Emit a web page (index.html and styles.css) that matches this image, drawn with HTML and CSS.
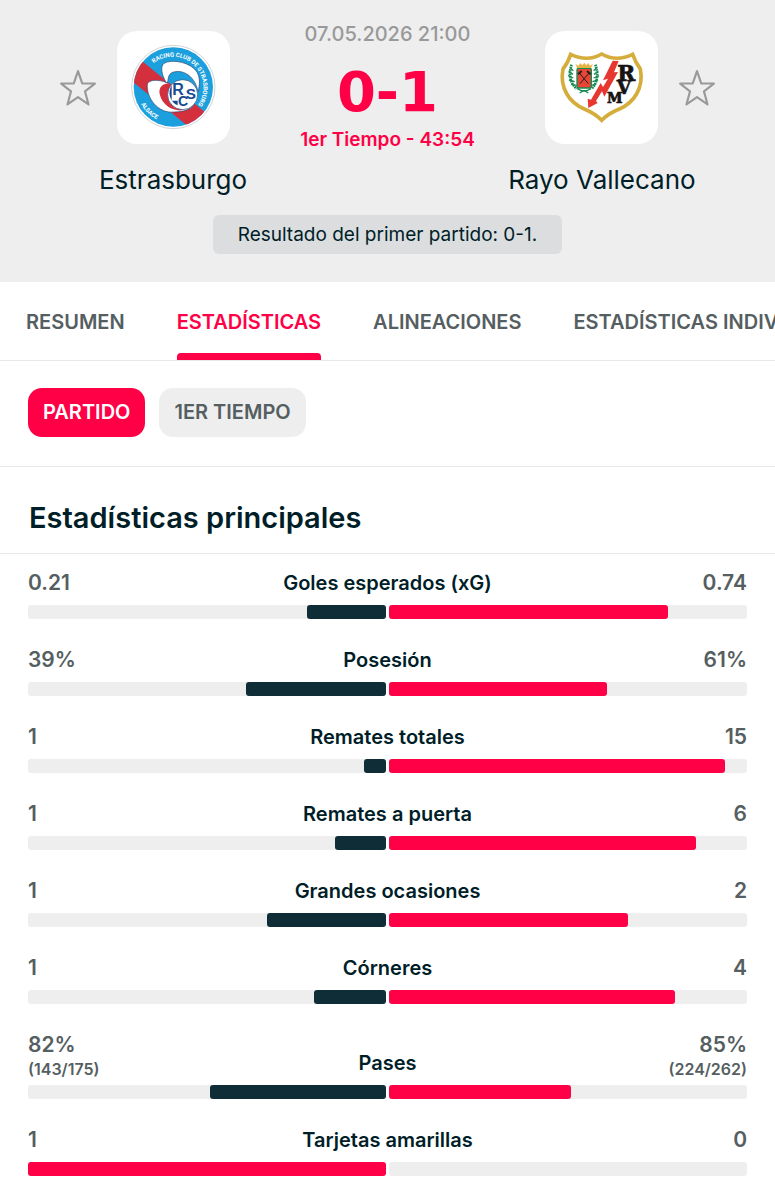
FILE: index.html
```html
<!DOCTYPE html>
<html lang="es">
<head>
    <meta charset="UTF-8">
    <meta name="viewport" content="width=device-width, initial-scale=1.0">
    <title>Estrasburgo - Rayo Vallecano</title>
    <link rel="stylesheet" href="styles.css">
</head>
<body>
    <header class="match-header">
        <div class="scoreboard">
            <div class="team">
                <button class="star" type="button" aria-label="Seguir a Estrasburgo">
                    <svg viewBox="0 0 36 36"><path d="M18 2 L22 13.6 L34 13.8 L24.6 21.2 L28 33.6 L18 26.6 L8 33.6 L11.4 21.2 L2 13.8 L14 13.6 Z"/></svg>
                </button>
                <div class="crest">
                    <svg viewBox="225 54 294 294">
                        <defs>
                            <clipPath id="disc"><circle cx="373" cy="201" r="119"/></clipPath>
                            <path id="arcTop" d="M314 130 A92 92 0 1 1 414 283.500"/>
                            <path id="arcBottom" d="M276 252 A110 110 0 0 0 345 307"/>
                        </defs>
                        <circle cx="373" cy="201" r="125" fill="#fff" stroke="#b9bec2" stroke-width="2"/>
                        <g clip-path="url(#disc)">
                            <rect x="250" y="78" width="250" height="250" fill="#1c9fdd"/>
                            <path d="M265 112 L500 303 L450 345 L235 172 Z" fill="#d32f3c"/>
                        </g>
                        <path d="M352 188 C338 165 333 140 345 130 C366 116 428 126 445 158 C456 180 450 204 447 216 C440 172 406 148 374 156 C358 160 358 174 356 187 Z" fill="#fff" stroke="#27436f" stroke-width="2"/>
                        <path d="M357 187 C360 168 374 160 394 165 C424 170 440 190 446 214 L440 240 C430 190 390 176 357 187 Z" fill="#1c9fdd"/>
                        <path d="M352 188 C332 178 300 178 295 192 C291 234 328 282 376 276 C406 276 424 268 434 256 L400 262 C366 252 352 218 362 190 Z" fill="#fff" stroke="#27436f" stroke-width="2"/>
                        <path d="M360 190 C334 192 328 208 333 226 C342 260 378 276 404 270 C374 252 362 226 368 196 Z" fill="#d32f3c"/>
                        <circle cx="401" cy="224" r="45" fill="#fff" stroke="#27436f" stroke-width="2"/>
                        <path d="M368 196 L368 242 L386 242 L386 256 C364 248 354 220 368 196 Z" fill="#164a91"/>
                        <g class="monogram">
                            <text x="370" y="226" font-size="48">R</text>
                            <text x="387" y="259" font-size="42">C</text>
                            <text x="410" y="238" font-size="46">S</text>
                        </g>
                        <text class="crest-text"><textPath href="#arcTop">RACING CLUB DE STRASBOURG</textPath></text>
                        <text class="crest-text"><textPath href="#arcBottom">ALSACE</textPath></text>
                    </svg>
                </div>
                <div class="team-name">Estrasburgo</div>
            </div>

            <div class="result">
                <div class="date">07.05.2026 21:00</div>
                <div class="score">0-1</div>
                <div class="status">1er Tiempo - 43:54</div>
            </div>

            <div class="team team-away">
                <button class="star" type="button" aria-label="Seguir a Rayo Vallecano">
                    <svg viewBox="0 0 36 36"><path d="M18 2 L22 13.6 L34 13.8 L24.6 21.2 L28 33.6 L18 26.6 L8 33.6 L11.4 21.2 L2 13.8 L14 13.6 Z"/></svg>
                </button>
                <div class="crest">
                    <svg viewBox="48 54 294 294">
                        <path d="M104 103 Q154 127 197 102 Q241 127 290 103 Q299 129 313 147 C324 204 294 248 250 267 Q216 281 197 301 Q178 281 145 267 C100 248 70 204 81 147 Q96 129 104 103 Z" fill="#fff" stroke="#d5ad3c" stroke-width="11"/>
                        <!-- laurel -->
                        <g fill="none" stroke="#168b50" stroke-width="8" stroke-dasharray="5 2">
                            <path d="M107 134 C98 158 100 188 122 206"/>
                            <path d="M178 134 C187 158 186 188 167 206"/>
                        </g>
                        <g fill="none" stroke="#168b50" stroke-width="4">
                            <path d="M103 143 L112 152 M98 154 L111 163 M96 167 L112 174 M99 180 L116 185 M105 193 L122 196"/>
                            <path d="M182 143 L173 152 M187 154 L174 163 M189 167 L173 174 M186 180 L169 185 M180 193 L163 196"/>
                            <path d="M124 206 Q144 220 165 206 M144 211 L131 219 M144 211 L157 219"/>
                        </g>
                        <rect x="123" y="145" width="43" height="59" rx="4" fill="#e94435" stroke="#168b50" stroke-width="4"/>
                        <path d="M124 144 L118 132 L128 137 L133 129 L139 136 L145 128 L151 136 L157 129 L162 137 L171 132 L165 144 Z" fill="#e5b544"/>
                        <path d="M130 159 L157 191 M159 159 L132 191" stroke="#251f20" stroke-width="3"/>
                        <path d="M126 163 L137 153 M153 153 L164 163" stroke="#251f20" stroke-width="6"/>
                        <path d="M230 122 L248 123 L234 157 L246 156 L205 230 L198 214 L180 243 L185 249 L157 264 L155 236 L165 239 L194 189 L201 201 L216 176 L201 181 Z" fill="#e63731"/>
                        <g class="rvm">
                            <text x="244" y="182" font-size="65">R</text>
                            <text x="242" y="221" font-size="56">V</text>
                            <text x="213" y="250" font-size="42">M</text>
                        </g>
                    </svg>
                </div>
                <div class="team-name">Rayo Vallecano</div>
            </div>
        </div>
        <div class="first-leg">Resultado del primer partido: 0-1.</div>
    </header>

    <nav class="tabs">
        <a href="#resumen">RESUMEN</a>
        <a class="active" href="#estadisticas">ESTADÍSTICAS</a>
        <a href="#alineaciones">ALINEACIONES</a>
        <a href="#individuales">ESTADÍSTICAS INDIVIDUALES</a>
    </nav>

    <div class="filters">
        <button class="filter selected" type="button">PARTIDO</button>
        <button class="filter" type="button">1ER TIEMPO</button>
    </div>

    <main id="estadisticas">
        <h1>Estadísticas principales</h1>
        <ul class="stats">
            <li class="stat">
                <div class="values"><span class="value">0.21</span><span class="label">Goles esperados (xG)</span><span class="value">0.74</span></div>
                <div class="bars">
                    <div class="track home"><div class="fill" style="width: 22.1%"></div></div>
                    <div class="track away"><div class="fill lead" style="width: 77.9%"></div></div>
                </div>
            </li>
            <li class="stat">
                <div class="values"><span class="value">39%</span><span class="label">Posesión</span><span class="value">61%</span></div>
                <div class="bars">
                    <div class="track home"><div class="fill" style="width: 39%"></div></div>
                    <div class="track away"><div class="fill lead" style="width: 61%"></div></div>
                </div>
            </li>
            <li class="stat">
                <div class="values"><span class="value">1</span><span class="label">Remates totales</span><span class="value">15</span></div>
                <div class="bars">
                    <div class="track home"><div class="fill" style="width: 6.25%"></div></div>
                    <div class="track away"><div class="fill lead" style="width: 93.75%"></div></div>
                </div>
            </li>
            <li class="stat">
                <div class="values"><span class="value">1</span><span class="label">Remates a puerta</span><span class="value">6</span></div>
                <div class="bars">
                    <div class="track home"><div class="fill" style="width: 14.3%"></div></div>
                    <div class="track away"><div class="fill lead" style="width: 85.7%"></div></div>
                </div>
            </li>
            <li class="stat">
                <div class="values"><span class="value">1</span><span class="label">Grandes ocasiones</span><span class="value">2</span></div>
                <div class="bars">
                    <div class="track home"><div class="fill" style="width: 33.3%"></div></div>
                    <div class="track away"><div class="fill lead" style="width: 66.7%"></div></div>
                </div>
            </li>
            <li class="stat">
                <div class="values"><span class="value">1</span><span class="label">Córneres</span><span class="value">4</span></div>
                <div class="bars">
                    <div class="track home"><div class="fill" style="width: 20%"></div></div>
                    <div class="track away"><div class="fill lead" style="width: 80%"></div></div>
                </div>
            </li>
            <li class="stat">
                <div class="values"><span class="value">82%<small>(143/175)</small></span><span class="label">Pases</span><span class="value">85%<small>(224/262)</small></span></div>
                <div class="bars">
                    <div class="track home"><div class="fill" style="width: 49.1%"></div></div>
                    <div class="track away"><div class="fill lead" style="width: 50.9%"></div></div>
                </div>
            </li>
            <li class="stat">
                <div class="values"><span class="value">1</span><span class="label">Tarjetas amarillas</span><span class="value">0</span></div>
                <div class="bars">
                    <div class="track home"><div class="fill lead" style="width: 100%"></div></div>
                    <div class="track away"><div class="fill" style="width: 0%"></div></div>
                </div>
            </li>
        </ul>
    </main>
</body>
</html>
```
FILE: styles.css
```css
/* General Styles */
* {
    box-sizing: border-box;
}

body {
    font-family: Inter, "Liberation Sans", sans-serif;
    background-color: #ffffff;
    color: #001e28;
    margin: 0;
    overflow-x: hidden;
}

button {
    font-family: inherit;
    border: none;
    cursor: pointer;
}

/* Match Header */
.match-header {
    background-color: #eeeeee;
    padding: 20px 46px 28px;
}

.scoreboard {
    display: grid;
    grid-template-columns: 1fr auto 1fr;
}

.team {
    display: grid;
    grid-template-columns: 1fr auto 1fr;
    align-items: center;
    column-gap: 20px;
    padding-top: 11px;
}

.crest {
    grid-column: 2;
    grid-row: 1;
    width: 113px;
    height: 113px;
    padding: 7px;
    background-color: #ffffff;
    border-radius: 20px;
}

.crest svg {
    display: block;
    width: 98px;
    height: 98px;
}

.crest-text {
    font-family: Roboto, sans-serif;
    font-size: 18px;
    font-weight: bold;
    fill: #ffffff;
}

.monogram {
    font-family: "Liberation Sans", sans-serif;
    font-weight: bold;
    fill: #164a91;
}

.rvm {
    font-family: "DejaVu Serif", serif;
    font-weight: bold;
    fill: #171314;
    stroke: #171314;
    stroke-width: 2;
}

.star {
    grid-column: 1;
    grid-row: 1;
    justify-self: end;
    padding: 0;
    background: none;
}

.team-away .star {
    grid-column: 3;
    justify-self: start;
}

.star svg {
    display: block;
    width: 38px;
    height: 38px;
    fill: none;
    stroke: #999999;
    stroke-width: 2;
    stroke-linejoin: round;
}

.team-name {
    grid-column: 1 / 4;
    padding-top: 20px;
    font-size: 26px;
    line-height: 32px;
    text-align: center;
    white-space: nowrap;
}

/* Result */
.result {
    text-align: center;
    white-space: nowrap;
}

.date {
    font-size: 20px;
    font-weight: 500;
    line-height: 28px;
    color: #999999;
}

.score {
    padding-top: 12px;
    font-family: "DejaVu Sans", sans-serif;
    font-size: 56px;
    font-weight: bold;
    line-height: 64px;
    color: #ff0046;
}

.status {
    font-size: 19px;
    font-weight: 600;
    line-height: 32px;
    color: #ff0046;
}

.first-leg {
    width: fit-content;
    margin: 19px auto 0;
    padding: 0 25px;
    background-color: #dcdddf;
    border-radius: 6px;
    font-size: 19px;
    line-height: 39px;
}

/* Tabs */
.tabs {
    display: flex;
    gap: 52px;
    padding: 0 26px;
    border-bottom: 1px solid #e6e8e9;
    overflow: hidden;
}

.tabs a {
    padding-top: 24px;
    font-size: 20px;
    font-weight: 600;
    line-height: 32px;
    color: #555e61;
    text-decoration: none;
    white-space: nowrap;
}

.tabs a::after {
    content: "";
    display: block;
    height: 7px;
    margin-top: 15px;
    border-radius: 4px 4px 0 0;
}

.tabs .active {
    color: #ff0046;
}

.tabs .active::after {
    background-color: #ff0046;
}

/* Filter Buttons */
.filters {
    display: flex;
    gap: 14px;
    padding: 27px 28px 29px;
    border-bottom: 1px solid #e6e8e9;
}

.filter {
    padding: 0 15px;
    border-radius: 14px;
    background-color: #eeeeee;
    color: #555e61;
    font-size: 20px;
    font-weight: 600;
    line-height: 49px;
}

.filter.selected {
    background-color: #ff0046;
    color: #ffffff;
}

/* Statistics */
h1 {
    margin: 0;
    padding: 30px 29px 15px;
    border-bottom: 1px solid #e6e8e9;
    font-size: 29px;
    font-weight: 600;
    line-height: 41px;
}

.stats {
    display: grid;
    gap: 26px;
    margin: 0;
    padding: 14px 28px 22px;
    list-style: none;
}

.values {
    display: grid;
    grid-template-columns: 1fr auto 1fr;
    align-items: end;
    padding-bottom: 7px;
    line-height: 30px;
}

.value {
    font-size: 21px;
    font-weight: 600;
    color: #555e61;
}

.value:last-child {
    text-align: right;
}

.value small {
    display: block;
    font-size: 16px;
    line-height: 18px;
}

.label {
    font-size: 20px;
    font-weight: 600;
}

.bars {
    display: grid;
    grid-template-columns: 1fr 1fr;
    gap: 3px;
}

.track {
    display: flex;
    height: 14px;
    background-color: #eeeeee;
    border-radius: 3px;
}

.track.home {
    justify-content: flex-end;
}

.fill {
    background-color: #0f2d37;
    border-radius: 3px;
}

.fill.lead {
    background-color: #ff0046;
}
```
